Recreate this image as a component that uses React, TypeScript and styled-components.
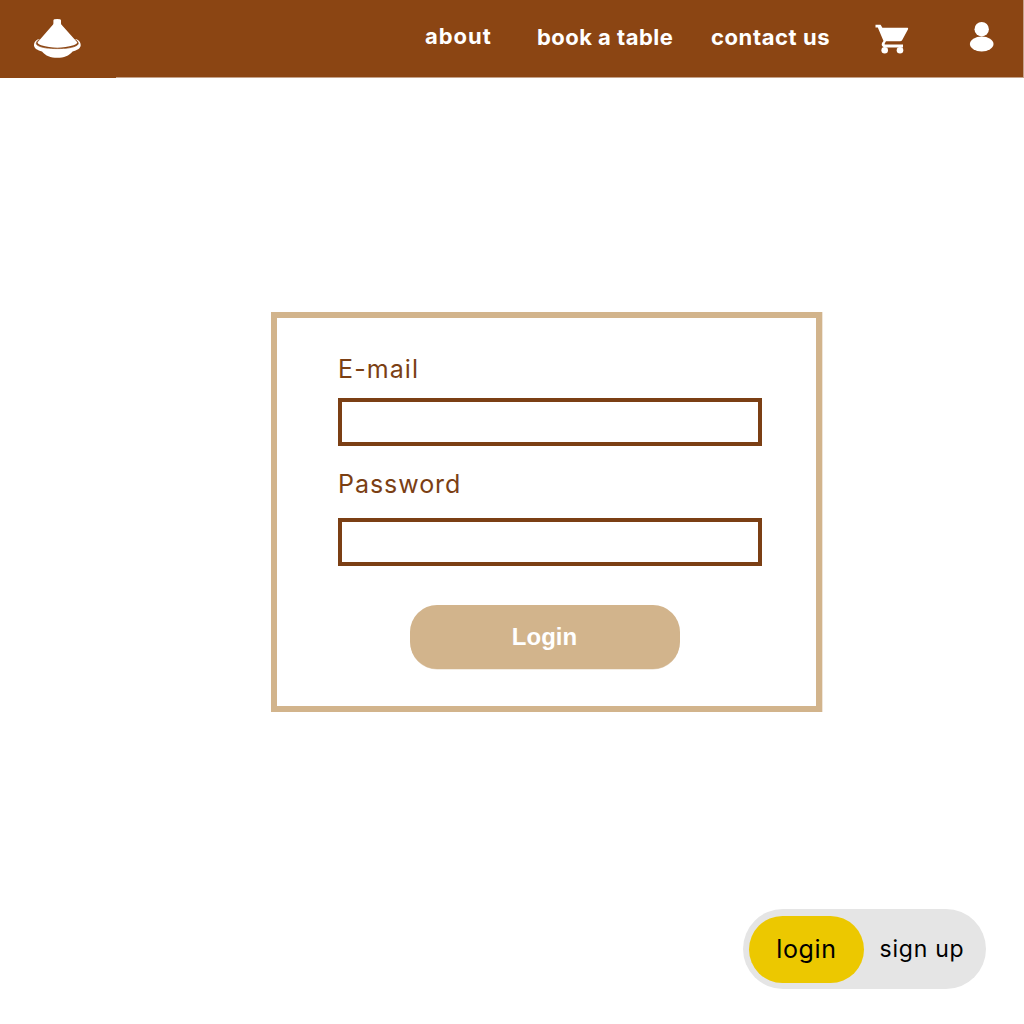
import React from "react";
import styled, { createGlobalStyle } from "styled-components";

const GlobalStyle = createGlobalStyle`
  *, *::before, *::after { box-sizing: border-box; }
  body { margin: 0; background: #fff; font-family: Inter, "Liberation Sans", sans-serif; }
`;

const Page = styled.div`
  width: 1024px;
  height: 1024px;
  display: flex;
  flex-direction: column;
  background: #fff;
  overflow: hidden;
`;

const Header = styled.header`
  height: 78px;
  flex: none;
  display: flex;
  align-items: flex-start;
  background: linear-gradient(#8b4513, #8b4513) 0 0 / 1023px 77px no-repeat, #c5a289;
`;

const Logo = styled.a`
  width: 116px;
  height: 78px;
  background: #8b4513;
  svg { display: block; }
`;

const Nav = styled.nav`
  flex: 1;
  display: flex;
  align-items: flex-start;
  padding-left: 309px;
`;

const NavLink = styled.a<{ $width: number; $drop?: number; $track: number }>`
  width: ${(p) => p.$width}px;
  margin-top: ${(p) => 22 + (p.$drop ?? 0)}px;
  font-size: 22px;
  line-height: 28px;
  font-weight: 700;
  letter-spacing: ${(p) => p.$track}px;
  white-space: nowrap;
  color: #fff;
`;

const IconLink = styled.a<{ $gap: number }>`
  margin-left: ${(p) => p.$gap}px;
  svg { display: block; }
`;

const Card = styled.form`
  width: 551px;
  height: 400px;
  margin: 234px 0 0 271px;
  padding: 35px 55px 0 61px;
  flex: none;
  display: flex;
  flex-direction: column;
  border: 6px solid #d2b48c;
  box-shadow: 1px 0 0 #f0e6da;
`;

const Label = styled.label<{ $gap: number; $track: number }>`
  height: 32px;
  margin-bottom: ${(p) => p.$gap}px;
  font-size: 25px;
  line-height: 32px;
  letter-spacing: ${(p) => p.$track}px;
  color: #7b3f14;
`;

const Field = styled.input<{ $gap: number }>`
  width: 424px;
  height: 48px;
  margin: 0 0 ${(p) => p.$gap}px;
  padding: 0 12px;
  border: 4px solid #7b3f14;
  border-radius: 0;
  outline: none;
  background: #fff;
  font: 20px Inter, sans-serif;
  color: #7b3f14;
`;

const Submit = styled.button`
  width: 270px;
  height: 64px;
  margin-left: 72px;
  padding: 0 1px 0 0;
  border: 0;
  border-radius: 27px;
  background: #d2b48c;
  box-shadow: 0 1px 0 -0.5px #e8d9c5;
  color: #fff;
  font: bold 24px/30px "Liberation Sans", Arial, sans-serif;
`;

const Toggle = styled.div`
  width: 243px;
  height: 80px;
  margin: auto 38px 35px auto;
  padding: 6px;
  display: flex;
  align-items: center;
  border-radius: 40px;
  background: #e5e5e5;
`;

const Option = styled.button<{ $active?: boolean }>`
  width: ${(p) => (p.$active ? 115 : 116)}px;
  height: 67px;
  padding: 0;
  border: 0;
  border-radius: 34px;
  background: ${(p) => (p.$active ? "#ecc800" : "transparent")};
  color: #000;
  font: 400 ${(p) => (p.$active ? 25 : 23)}px/32px Inter, sans-serif;
  letter-spacing: ${(p) => (p.$active ? 0.7 : 0.75)}px;
`;

const Tagine = () => (
  <svg width="116" height="78" viewBox="0 0 116 78" fill="#fff" aria-label="Home">
    <path d="M38 39.2C35 40.7 33.8 43.2 34 45.4C34.3 48.6 37.6 50.1 42 51.4C45.6 55.7 50.6 57.8 57.3 57.8S69 55.7 72.6 51.4C77 50.1 80.4 48.6 80.7 45.4C80.9 43.2 79.7 40.7 76.7 39.2L57.3 43Z" />
    <path
      d="M38.3 40.2C36 42.4 35.6 44 37.6 45.3C41.2 47.7 49 48.6 57.3 48.6S73.4 47.7 77 45.3C79 44 78.6 42.4 76.3 40.2L57.3 36Z"
      fill="#8b4513"
      stroke="#8b4513"
      strokeWidth="0.7"
    />
    <path d="M53.4 20.4Q53.4 19 57.2 19T61 20.4V23.6Q61 24.6 62.2 25.6L77.2 42.3Q77.5 43.9 73.5 45.3C63 48.6 51.6 48.6 41.1 45.3Q37.2 43.9 37.6 42.3L52.2 25.6Q53.4 24.6 53.4 23.6Z" />
  </svg>
);

const Cart = () => (
  <svg width="34" height="78" viewBox="875 0 34 78" fill="#fff" aria-label="Cart">
    <path d="M875.5 24.7H880.6L882.4 27.8H907.7Q908.6 28.2 907.9 29.6L902.1 40.2Q901.5 41.3 900 41.3H886L884.7 43.4V44.6H903V47.5H884.7Q881.7 46.8 881.7 44.2Q881.7 42.7 883.5 40.9L877.8 27.5H875.5Z" />
    <circle cx="884.7" cy="50.3" r="3.3" />
    <circle cx="900" cy="50.3" r="3.3" />
  </svg>
);

const Person = () => (
  <svg width="26" height="78" viewBox="969 0 26 78" fill="#fff" aria-label="Account">
    <ellipse cx="981.7" cy="29.2" rx="7.2" ry="7.2" />
    <ellipse cx="981.7" cy="44" rx="11.8" ry="7.4" />
  </svg>
);

export default function App() {
  return (
    <Page>
      <GlobalStyle />
      <Header>
        <Logo><Tagine /></Logo>
        <Nav>
          <NavLink $width={112} $track={0.95}>about</NavLink>
          <NavLink $width={174} $drop={1} $track={0.46}>book a table</NavLink>
          <NavLink $width={120} $drop={1} $track={0.59}>contact us</NavLink>
          <IconLink $gap={44}><Cart /></IconLink>
          <IconLink $gap={60}><Person /></IconLink>
        </Nav>
      </Header>
      <Card onSubmit={(e) => e.preventDefault()}>
        <Label htmlFor="email" $gap={13} $track={1.1}>E-mail</Label>
        <Field id="email" type="email" $gap={22} />
        <Label htmlFor="password" $gap={18} $track={0.95}>Password</Label>
        <Field id="password" type="password" $gap={39} />
        <Submit type="submit">Login</Submit>
      </Card>
      <Toggle>
        <Option $active>login</Option>
        <Option>sign up</Option>
      </Toggle>
    </Page>
  );
}
